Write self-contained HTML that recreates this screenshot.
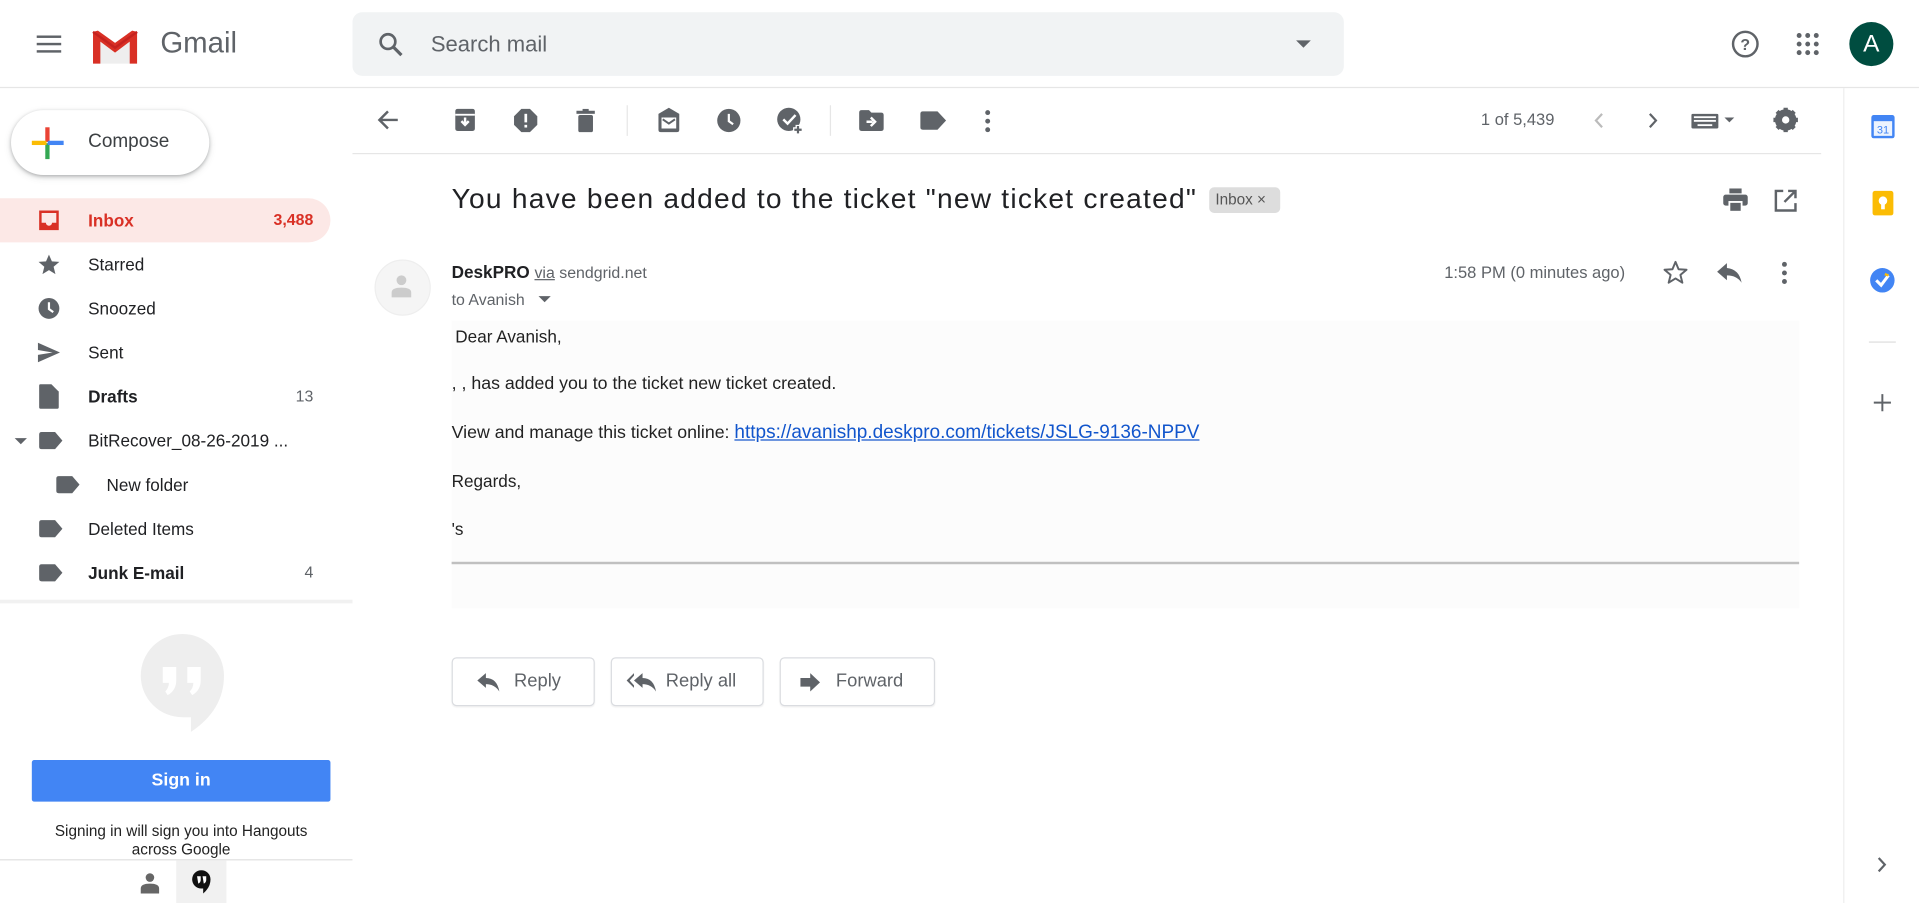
<!DOCTYPE html>
<html><head><meta charset="utf-8"><style>
html,body{margin:0;padding:0;width:1919px;height:903px;overflow:hidden;background:#fff;font-family:"Liberation Sans",Arial,sans-serif;}
#w{position:absolute;left:0;top:0;width:1568px;height:738px;transform:scale(1.2239);transform-origin:0 0;}
.a{position:absolute;}
.t{position:absolute;white-space:nowrap;}
svg{position:absolute;overflow:visible}
.nav{position:absolute;left:0;width:270px;height:36px;font-size:14px;color:#202124;}
.nav .lb{position:absolute;left:72px;top:10px}
.nav .ct{position:absolute;right:14px;top:10px;font-size:13px;color:#5f6368}
.btn{position:absolute;top:537px;height:38px;border:1px solid #dadce0;border-radius:4px;font-size:15px;color:#5f6368;box-shadow:0 1px 1px rgba(0,0,0,.06)}
.btn span{position:absolute;top:10px}
.bd{position:absolute;left:369px;font-size:14px;color:#222;white-space:nowrap}
</style></head><body><div id="w">
<!-- header -->
<div class="a" style="left:0;top:71px;width:1568px;height:1px;background:#e6e6e6"></div>
<svg style="left:30px;top:28px" width="20" height="16"><g fill="#5f6368"><rect y="1" width="20" height="2"/><rect y="7" width="20" height="2"/><rect y="13" width="20" height="2"/></g></svg>
<svg style="left:74px;top:23px" width="40" height="30"><path d="M2 4 L20 17 L38 4 V29 H2Z" fill="#eee"/><path d="M2 3 V29 H8 V11 L20 20 L32 11 V29 H38 V3 L34 2 L20 12 L6 2Z" fill="#d93025"/><path d="M2 3 L20 16 L38 3" fill="none" stroke="#c5221f" stroke-width="2"/></svg>
<div class="t" style="left:131px;top:22px;font-size:24px;color:#5f6368">Gmail</div>
<div class="a" style="left:288px;top:10px;width:810px;height:52px;background:#f1f3f4;border-radius:8px"></div>
<svg style="left:309px;top:26px" width="22" height="22"><circle cx="8" cy="8" r="6" fill="none" stroke="#5f6368" stroke-width="2.2"/><path d="M12.5 12.5 L19 19" stroke="#5f6368" stroke-width="2.6"/></svg>
<div class="t" style="left:352px;top:26px;font-size:18px;color:#5f6368">Search mail</div>
<svg style="left:1059px;top:33px" width="12" height="6"><path d="M0 0 H12 L6 6Z" fill="#5f6368"/></svg>
<svg style="left:1415px;top:25px" width="22" height="22"><circle cx="11" cy="11" r="10" fill="none" stroke="#5f6368" stroke-width="2"/><text x="11" y="16" font-size="13" font-weight="bold" text-anchor="middle" fill="#5f6368" font-family="Liberation Sans">?</text></svg>
<svg style="left:1467px;top:26px" width="20" height="20"><g fill="#5f6368"><circle cx="3" cy="3" r="2"/><circle cx="10" cy="3" r="2"/><circle cx="17" cy="3" r="2"/><circle cx="3" cy="10" r="2"/><circle cx="10" cy="10" r="2"/><circle cx="17" cy="10" r="2"/><circle cx="3" cy="17" r="2"/><circle cx="10" cy="17" r="2"/><circle cx="17" cy="17" r="2"/></g></svg>
<div class="a" style="left:1511px;top:18px;width:36px;height:36px;border-radius:50%;background:#004d40;color:#fff;font-size:20px;text-align:center;line-height:36px">A</div>
<!-- sidebar -->
<div class="a" style="left:9px;top:90px;width:162px;height:53px;border-radius:27px;background:#fff;box-shadow:0 1px 3px rgba(60,64,67,.35),0 2px 6px rgba(60,64,67,.15)"></div>
<svg style="left:26px;top:104px" width="26" height="26"><rect x="11" y="0" width="3.5" height="12" fill="#ea4335"/><rect x="11" y="13" width="3.5" height="13" fill="#34a853"/><rect x="0" y="11" width="12" height="3.5" fill="#fbbc04"/><rect x="13" y="11" width="13" height="3.5" fill="#4285f4"/></svg>
<div class="t" style="left:72px;top:107px;font-size:15.5px;color:#3c4043">Compose</div>
<div class="nav" style="top:162px;background:#fce8e6;border-radius:0 18px 18px 0;color:#d93025;font-weight:bold"><svg style="left:31px;top:9px" width="18" height="18"><path d="M1 1 H17 V17 H1Z M3 3 V11 H6.5 A2.5 2.5 0 0 0 11.5 11 H15 V3Z" fill="#d93025" fill-rule="evenodd"/></svg><span class="lb">Inbox</span><span class="ct" style="color:#d93025;font-weight:bold">3,488</span></div>
<div class="nav" style="top:198px"><svg style="left:31px;top:9px" width="18" height="18"><path d="M9 1 L11.4 6.6 L17.5 7 L12.8 11 L14.3 17 L9 13.7 L3.7 17 L5.2 11 L0.5 7 L6.6 6.6Z" fill="#5f6368"/></svg><span class="lb">Starred</span></div>
<div class="nav" style="top:234px"><svg style="left:31px;top:9px" width="18" height="18"><circle cx="9" cy="9" r="8.5" fill="#5f6368"/><path d="M9 4 V9.5 L12.5 12" stroke="#fff" stroke-width="1.8" fill="none"/></svg><span class="lb">Snoozed</span></div>
<div class="nav" style="top:270px"><svg style="left:31px;top:9px" width="18" height="18"><path d="M0 1 L18 9 L0 17 V11 L12 9 L0 7Z" fill="#5f6368"/></svg><span class="lb">Sent</span></div>
<div class="nav" style="top:306px;font-weight:bold"><svg style="left:32px;top:8px" width="16" height="20"><path d="M0 1 Q0 0 1 0 H10 L16 6 V19 Q16 20 15 20 H1 Q0 20 0 19Z" fill="#5f6368"/></svg><span class="lb">Drafts</span><span class="ct" style="font-weight:normal">13</span></div>
<div class="nav" style="top:342px"><svg style="left:12px;top:16px" width="10" height="5"><path d="M0 0 H10 L5 5Z" fill="#5f6368"/></svg><svg style="left:32px;top:11px" width="19" height="14"><path d="M2 0 H13 L19 7 L13 14 H2 Q0 14 0 12 V2 Q0 0 2 0Z" fill="#5f6368"/></svg><span class="lb">BitRecover_08-26-2019 ...</span></div>
<div class="nav" style="top:378px"><svg style="left:46px;top:11px" width="19" height="14"><path d="M2 0 H13 L19 7 L13 14 H2 Q0 14 0 12 V2 Q0 0 2 0Z" fill="#5f6368"/></svg><span class="lb" style="left:87px">New folder</span></div>
<div class="nav" style="top:414px"><svg style="left:32px;top:11px" width="19" height="14"><path d="M2 0 H13 L19 7 L13 14 H2 Q0 14 0 12 V2 Q0 0 2 0Z" fill="#5f6368"/></svg><span class="lb">Deleted Items</span></div>
<div class="nav" style="top:450px;font-weight:bold"><svg style="left:32px;top:11px" width="19" height="14"><path d="M2 0 H13 L19 7 L13 14 H2 Q0 14 0 12 V2 Q0 0 2 0Z" fill="#5f6368"/></svg><span class="lb">Junk E-mail</span><span class="ct" style="font-weight:normal">4</span></div>
<div class="a" style="left:0;top:490px;width:288px;height:3px;background:#f1f1f1"></div>
<svg style="left:114px;top:518px" width="70" height="82"><path d="M35 0 A34 34 0 0 1 69 34 Q69 62 42 80 V68 H35 A34 34 0 0 1 35 0Z" fill="#eee"/><path d="M19 27 H30 V38 Q30 46 23 50 L21 47 Q24 44 24 40 H19Z M39 27 H50 V38 Q50 46 43 50 L41 47 Q44 44 44 40 H39Z" fill="#fff"/></svg>
<div class="a" style="left:26px;top:621px;width:244px;height:34px;background:#4285f4;border-radius:2px;color:#fff;font-weight:bold;font-size:14.5px;text-align:center;line-height:34px">Sign in</div>
<div class="t" style="left:0;width:296px;text-align:center;top:672px;font-size:12.5px;color:#222;line-height:15px">Signing in will sign you into Hangouts<br>across Google</div>
<div class="a" style="left:0;top:702px;width:288px;height:1px;background:#e0e0e0"></div>
<div class="a" style="left:144px;top:703px;width:41px;height:35px;background:#f1f1f1"></div>
<svg style="left:115px;top:713px" width="15" height="17"><circle cx="7.5" cy="4" r="3.5" fill="#666"/><path d="M0 17 V13 Q0 9 7.5 9 Q15 9 15 13 V17Z" fill="#666"/></svg>
<svg style="left:157px;top:711px" width="15" height="20"><path d="M7.5 0 A7.5 7.5 0 0 1 15 7.5 Q15 14 9 19 V15 H7.5 A7.5 7.5 0 0 1 7.5 0Z" fill="#111"/><path d="M4 5 H7 V8 Q7 10 5 11 Z M8.5 5 H11.5 V8 Q11.5 10 9.5 11Z" fill="#fff"/></svg>
<!-- toolbar -->
<div class="a" style="left:288px;top:125px;width:1200px;height:1px;background:#e6e6e6"></div>
<svg style="left:308px;top:90px" width="18" height="16"><path d="M17 8 H3 M9 1 L2 8 L9 15" stroke="#5f6368" stroke-width="2" fill="none"/></svg>
<svg style="left:371px;top:89px" width="18" height="18"><path d="M1 2 Q1 0 3 0 H15 Q17 0 17 2 V16 Q17 18 15 18 H3 Q1 18 1 16Z" fill="#5f6368"/><rect x="1" y="4" width="16" height="1.5" fill="#fff"/><path d="M9 7 V13 M6 10 L9 13 L12 10" stroke="#fff" stroke-width="2" fill="none"/></svg>
<svg style="left:420px;top:89px" width="19" height="19"><path d="M6 0 H13 L19 6 V13 L13 19 H6 L0 13 V6Z" fill="#5f6368"/><rect x="8.5" y="4" width="2.2" height="7" fill="#fff"/><rect x="8.5" y="13" width="2.2" height="2.2" fill="#fff"/></svg>
<svg style="left:471px;top:89px" width="15" height="19"><rect x="0" y="1.5" width="15" height="2.5" fill="#5f6368"/><rect x="5" y="0" width="5" height="2" fill="#5f6368"/><rect x="1.5" y="5" width="12" height="14" rx="1.5" fill="#5f6368"/></svg>
<div class="a" style="left:512px;top:86px;width:1px;height:25px;background:#e6e6e6"></div>
<svg style="left:536px;top:88px" width="21" height="20"><path d="M10.5 0 L19 5 V18 Q19 20 17 20 H4 Q2 20 2 18 V5Z" fill="#5f6368"/><path d="M4.5 8 H16.5 V17 H4.5Z" fill="#fff"/><path d="M5.5 9.5 L10.5 13 L15.5 9.5" stroke="#5f6368" stroke-width="1.6" fill="none"/></svg>
<svg style="left:586px;top:89px" width="19" height="19"><circle cx="9.5" cy="9.5" r="9.5" fill="#5f6368"/><path d="M9.5 4 V10 L13 12.5" stroke="#fff" stroke-width="1.8" fill="none"/></svg>
<svg style="left:635px;top:88px" width="22" height="22"><circle cx="9.5" cy="9.5" r="9.5" fill="#5f6368"/><path d="M5 9.5 L8.5 13 L15 6" stroke="#fff" stroke-width="2" fill="none"/><path d="M17 14 V22 M13 18 H21" stroke="#fff" stroke-width="4"/><path d="M17 15 V21 M14 18 H20" stroke="#5f6368" stroke-width="1.8"/></svg>
<div class="a" style="left:678px;top:86px;width:1px;height:25px;background:#e6e6e6"></div>
<svg style="left:702px;top:90px" width="20" height="17"><path d="M0 2 Q0 0 2 0 H8 L10 2 H18 Q20 2 20 4 V15 Q20 17 18 17 H2 Q0 17 0 15Z" fill="#5f6368"/><path d="M6 9.5 H11 M9.5 6 L13 9.5 L9.5 13" stroke="#fff" stroke-width="2" fill="none"/></svg>
<svg style="left:752px;top:91px" width="21" height="15"><path d="M2 0 H14 L21 7.5 L14 15 H2 Q0 15 0 13 V2 Q0 0 2 0Z" fill="#5f6368"/></svg>
<svg style="left:805px;top:90px" width="4" height="18"><circle cx="2" cy="2" r="2" fill="#5f6368"/><circle cx="2" cy="9" r="2" fill="#5f6368"/><circle cx="2" cy="16" r="2" fill="#5f6368"/></svg>
<div class="t" style="left:1210px;top:90px;font-size:13.5px;color:#5f6368">1 of 5,439</div>
<svg style="left:1302px;top:92px" width="8" height="13"><path d="M7 1 L2 6.5 L7 12" stroke="#bbb" stroke-width="1.8" fill="none"/></svg>
<svg style="left:1347px;top:92px" width="8" height="13"><path d="M1 1 L6 6.5 L1 12" stroke="#5f6368" stroke-width="1.8" fill="none"/></svg>
<svg style="left:1382px;top:93px" width="38" height="12"><rect x="0" y="0" width="22" height="12" rx="1" fill="#5f6368"/><g fill="#fff"><rect x="2" y="2" width="18" height="1.5"/><rect x="2" y="5" width="18" height="1.5"/><rect x="5" y="8.5" width="12" height="1.5"/></g><path d="M27 3 H35 L31 7Z" fill="#5f6368"/></svg>
<svg style="left:1449px;top:88px" width="20" height="20"><circle cx="10" cy="10" r="6.5" fill="none" stroke="#5f6368" stroke-width="4.5"/><g stroke="#5f6368" stroke-width="3.5"><path d="M10 0 V20 M0 10 H20 M3 3 L17 17 M17 3 L3 17"/></g><circle cx="10" cy="10" r="3" fill="#fff"/></svg>
<!-- subject -->
<div class="t" style="left:369px;top:149px;font-size:23px;letter-spacing:1px;color:#202124">You have been added to the ticket "new ticket created"</div>
<div class="a" style="left:988px;top:153px;width:58px;height:21px;background:#ddd;border-radius:4px;font-size:12.5px;color:#555;line-height:21px;text-indent:5px">Inbox ×</div>
<svg style="left:1408px;top:154px" width="20" height="19"><rect x="5" y="0" width="10" height="4" fill="#5f6368"/><rect x="0" y="5" width="20" height="9" rx="2" fill="#5f6368"/><rect x="5" y="11" width="10" height="8" fill="#5f6368" stroke="#fff" stroke-width="1.5"/></svg>
<svg style="left:1450px;top:155px" width="18" height="18"><path d="M7 1 H1 V17 H17 V11" stroke="#5f6368" stroke-width="2" fill="none"/><path d="M11 1 H17 V7 M17 1 L8 10" stroke="#5f6368" stroke-width="2" fill="none"/></svg>
<!-- message header -->
<div class="a" style="left:306px;top:212px;width:44px;height:44px;border-radius:50%;background:#f5f5f5;border:1px solid #eee"></div>
<svg style="left:319px;top:224px" width="18" height="20"><circle cx="9" cy="5" r="4" fill="#ccc"/><path d="M1 19 V15 Q1 11 9 11 Q17 11 17 15 V19Z" fill="#ccc"/></svg>
<div class="t" style="left:369px;top:214px;font-size:14px;color:#202124"><b>DeskPRO</b> <span style="color:#5f6368;font-size:13px"><u>via</u> sendgrid.net</span></div>
<div class="t" style="left:369px;top:237px;font-size:13px;color:#5f6368">to Avanish</div>
<svg style="left:440px;top:242px" width="10" height="5"><path d="M0 0 H10 L5 5Z" fill="#5f6368"/></svg>
<div class="t" style="left:1180px;top:215px;font-size:13.5px;color:#5f6368">1:58 PM (0 minutes ago)</div>
<svg style="left:1359px;top:213px" width="20" height="19"><path d="M10 1 L12.5 7 L19 7.4 L14 11.6 L15.6 18 L10 14.5 L4.4 18 L6 11.6 L1 7.4 L7.5 7Z" fill="none" stroke="#5f6368" stroke-width="1.6" stroke-linejoin="round"/></svg>
<svg style="left:1403px;top:215px" width="20" height="16"><path d="M8 0 L0 7 L8 14 V10 Q16 10 20 16 Q18 5 8 4Z" fill="#5f6368"/></svg>
<svg style="left:1456px;top:214px" width="4" height="18"><circle cx="2" cy="2" r="2" fill="#5f6368"/><circle cx="2" cy="9" r="2" fill="#5f6368"/><circle cx="2" cy="16" r="2" fill="#5f6368"/></svg>
<!-- body -->
<div class="a" style="left:369px;top:262px;width:1101px;height:235px;background:#fcfcfc"></div>
<div class="bd" style="top:267px;left:372px">Dear Avanish,</div>
<div class="bd" style="top:306px;font-size:14.5px">, , has added you to the ticket new ticket created.</div>
<div class="bd" style="top:345px;font-size:14.5px">View and manage this ticket online: <span style="color:#15c;text-decoration:underline;font-size:15.5px">https://avanishp.deskpro.com/tickets/JSLG-9136-NPPV</span></div>
<div class="bd" style="top:385px">Regards,</div>
<div class="bd" style="top:424px">'s</div>
<div class="a" style="left:369px;top:459px;width:1101px;height:2px;background:#c0c0c0"></div>
<!-- buttons -->
<div class="btn" style="left:369px;width:115px"><svg style="left:20px;top:12px" width="18" height="15"><path d="M7 0 L0 6 L7 12 V9 Q14 9 18 15 Q16 4 7 4Z" fill="#5f6368"/></svg><span style="left:50px">Reply</span></div>
<div class="btn" style="left:499px;width:123px"><svg style="left:12px;top:12px" width="26" height="15"><path d="M6 0 L0 6 L6 12 V10 L2.5 6 L6 2Z" fill="#5f6368"/><path d="M13 0 L6 6 L13 12 V9 Q20 9 24 15 Q22 4 13 4Z" fill="#5f6368"/></svg><span style="left:44px">Reply all</span></div>
<div class="btn" style="left:637px;width:125px"><svg style="left:16px;top:12px" width="16" height="15"><path d="M0 4 H8 V0 L16 7.5 L8 15 V11 H0Z" fill="#5f6368"/></svg><span style="left:45px">Forward</span></div>
<!-- right panel -->
<div class="a" style="left:1506px;top:72px;width:1px;height:666px;background:#eee"></div>
<svg style="left:1529px;top:94px" width="19" height="19"><rect x="0" y="0" width="19" height="19" rx="2" fill="#4285f4"/><rect x="2" y="5" width="15" height="12" fill="#fff" opacity=".9"/><text x="9.5" y="15" font-size="9" text-anchor="middle" fill="#4285f4" font-family="Liberation Sans">31</text></svg>
<svg style="left:1530px;top:156px" width="17" height="20"><rect x="0" y="0" width="17" height="20" rx="2" fill="#fbbc04"/><circle cx="8.5" cy="8" r="3.5" fill="#fff"/><rect x="7" y="11" width="3" height="4" fill="#fff"/></svg>
<svg style="left:1528px;top:219px" width="20" height="20"><circle cx="10" cy="10" r="10" fill="#4285f4"/><path d="M5 10 L9 14 L15 6" stroke="#fff" stroke-width="2.5" fill="none"/><path d="M15 6 L12 5" stroke="#fbbc04" stroke-width="2"/></svg>
<div class="a" style="left:1527px;top:279px;width:22px;height:1px;background:#ddd"></div>
<svg style="left:1531px;top:322px" width="14" height="14"><path d="M7 0 V14 M0 7 H14" stroke="#5f6368" stroke-width="1.6"/></svg>
<svg style="left:1534px;top:700px" width="8" height="13"><path d="M1 1 L6 6.5 L1 12" stroke="#5f6368" stroke-width="1.8" fill="none"/></svg>
</div></body></html>
